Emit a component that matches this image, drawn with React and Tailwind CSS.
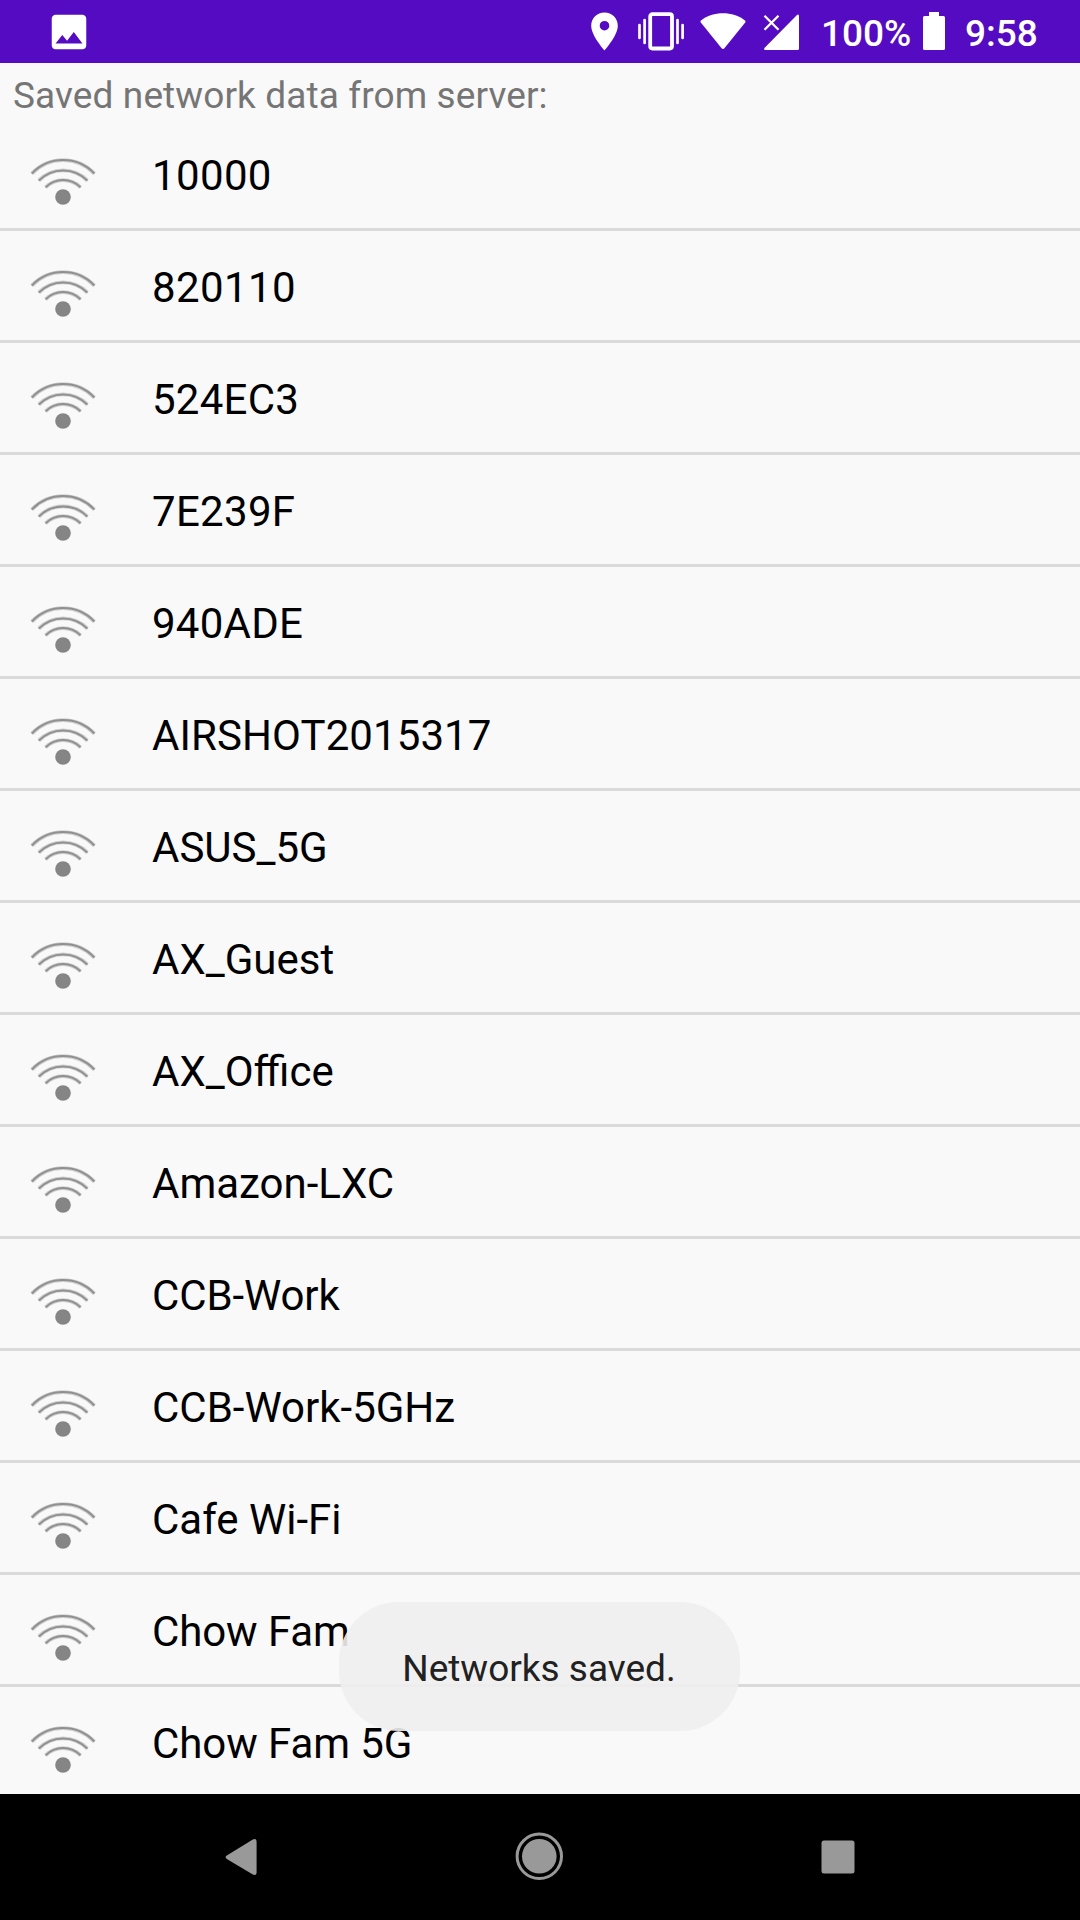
const networks = [
  { name: "10000", tracking: "tracking-[0.36px]" },
  { name: "820110", tracking: "tracking-[0.4px]" },
  { name: "524EC3", tracking: "tracking-[0.24px]" },
  { name: "7E239F", tracking: "tracking-[0.3px]" },
  { name: "940ADE", tracking: "tracking-[0.24px]" },
  { name: "AIRSHOT2015317", tracking: "tracking-[0.09px]" },
  { name: "ASUS_5G", tracking: "tracking-normal" },
  { name: "AX_Guest", tracking: "tracking-normal" },
  { name: "AX_Office", tracking: "tracking-normal" },
  { name: "Amazon-LXC", tracking: "tracking-normal" },
  { name: "CCB-Work", tracking: "tracking-[-0.12px]" },
  { name: "CCB-Work-5GHz", tracking: "tracking-normal" },
  { name: "Cafe Wi-Fi", tracking: "tracking-normal" },
  { name: "Chow Fam", tracking: "tracking-[-0.1px]" },
  { name: "Chow Fam 5G", tracking: "tracking-[-0.08px]" },
];

const wifiArcs =
  "M31.8 173.6A43 43 0 0 1 94.400 173.600M38.800 180.600A34 34 0 0 1 87.400 180.600M45.600 187.400A24.500 24.500 0 0 1 80.600 187.400";

function WifiIcon() {
  return (
    <svg className="ml-[30px] h-[109px] w-[66px] shrink-0" viewBox="30 119 66 109" fill="none">
      <path d={wifiArcs} stroke="#cfcfcf" strokeWidth="3.800" />
      <path d={wifiArcs} stroke="#909090" strokeWidth="2" />
      <circle cx="63" cy="197" r="7.800" fill="#858585" />
    </svg>
  );
}

function StatusBar() {
  return (
    <header className="flex h-[63px] shrink-0 items-center bg-[#540bc2] text-white">
      <svg className="ml-[46px] size-[46px]" viewBox="0 0 24 24" fill="currentColor">
        <path d="M21 19V5c0-1.1-.9-2-2-2H5c-1.1 0-2 .9-2 2v14c0 1.1.9 2 2 2h14c1.1 0 2-.9 2-2zM8.5 13.5l2.5 3.01L14.500 12l4.500 6H5l3.500-4.500z" />
      </svg>
      <svg className="ml-auto h-[63px] w-[28px]" viewBox="590 0 28 63" fill="currentColor">
        <path fillRule="evenodd" d="M604.500 12.500C597 12.500 591.200 18.400 591.200 25.700C591.200 35.700 604.500 50.300 604.500 50.300S617.800 35.700 617.800 25.700C617.800 18.400 612 12.500 604.500 12.500ZM604.500 30.500A4.800 4.800 0 1 1 604.500 20.900A4.800 4.800 0 0 1 604.500 30.500Z" />
      </svg>
      <svg className="ml-[20px] h-[63px] w-[46px]" viewBox="638 0 46 63" fill="none" stroke="currentColor">
        <rect x="650.200" y="14.200" width="21.800" height="34.300" rx="2.200" strokeWidth="3.800" />
        <path strokeWidth="2.700" strokeLinecap="round" d="M639.500 25V38M644.600 20V43M677.500 20V43M682.600 25V38" />
      </svg>
      <svg className="ml-[16px] h-[63px] w-[46px]" viewBox="700 0 46 63" fill="currentColor">
        <path d="M700.800 22.400Q700 21.400 701 20.500C713 10.800 733 10.800 744.900 20.500Q746 21.400 745.200 22.400L724.600 48Q723 49.800 721.400 48Z" />
      </svg>
      <svg className="ml-[17px] h-[63px] w-[37px]" viewBox="763 0 37 63" fill="currentColor">
        <path d="M764.700 47.700L796.500 15.400Q799 13.400 799 16.500V48.500Q799 50 797.500 50H765.500Q763 49.800 764.700 47.700Z" />
        <path d="M764.500 15.700L778.500 29.700M778.500 15.700L764.500 29.700" stroke="currentColor" strokeWidth="2.300" />
      </svg>
      <span className="ml-[21px] w-[90px] pt-[3px] text-[37px] leading-[43px] font-medium whitespace-nowrap">100%</span>
      <svg className="ml-[12px] h-[63px] w-[22px]" viewBox="923 0 22 63" fill="currentColor">
        <path d="M929 12H939V16H943.500Q945 16 945 17.500V48.500Q945 50 943.500 50H924.500Q923 50 923 48.500V17.500Q923 16 924.500 16H929Z" />
      </svg>
      <span className="ml-[20px] mr-[42px] w-[73px] pt-[3px] text-[37px] leading-[43px] font-medium whitespace-nowrap">9:58</span>
    </header>
  );
}

function NavigationBar() {
  return (
    <nav className="flex h-[126px] shrink-0 items-center bg-black text-[#999999]">
      <svg className="ml-[225px] h-[126px] w-[32px]" viewBox="225 1794 32 126" fill="currentColor">
        <path d="M226.800 1855.500L252 1840Q256.600 1837.500 256.600 1842V1872Q256.600 1876.500 252 1874L226.800 1858.900Q224.400 1857.200 226.800 1855.500Z" />
      </svg>
      <svg className="ml-[258px] h-[126px] w-[48px]" viewBox="515 1794 48 126">
        <circle cx="539.300" cy="1856.300" r="22.200" fill="none" stroke="currentColor" strokeWidth="3" />
        <circle cx="539.300" cy="1856.300" r="17.300" fill="currentColor" />
      </svg>
      <svg className="ml-[258px] h-[126px] w-[34px]" viewBox="821 1794 34 126" fill="currentColor">
        <rect x="821.500" y="1840.500" width="33" height="33" rx="2.500" />
      </svg>
    </nav>
  );
}

export default function App() {
  return (
    <div className="relative flex h-[1920px] w-[1080px] flex-col overflow-hidden bg-[#f9f9f9] font-['Roboto',sans-serif]">
      <StatusBar />
      <main className="flex min-h-0 flex-1 flex-col overflow-hidden">
        <h1 className="h-[56px] shrink-0 pt-[8px] pl-[13px] text-[37px] leading-[50px] font-normal tracking-[0.11px] text-[#757575]">
          Saved network data from server:
        </h1>
        <ul>
          {networks.map(({ name, tracking }) => (
            <li key={name} className="flex h-[112px] items-start border-b-[3px] border-[#dadada]">
              <WifiIcon />
              <span className={`ml-[56px] pt-[32px] text-[42px] leading-[49px] whitespace-nowrap text-black ${tracking}`}>
                {name}
              </span>
            </li>
          ))}
        </ul>
      </main>
      <NavigationBar />
      <div className="absolute top-[1602px] left-[339px] flex h-[129px] w-[401px] items-center justify-center rounded-[60px] bg-[#eeeeee]/90 pt-[4px] pr-[1px] text-[37px] text-[#212121]">
        Networks saved.
      </div>
    </div>
  );
}
